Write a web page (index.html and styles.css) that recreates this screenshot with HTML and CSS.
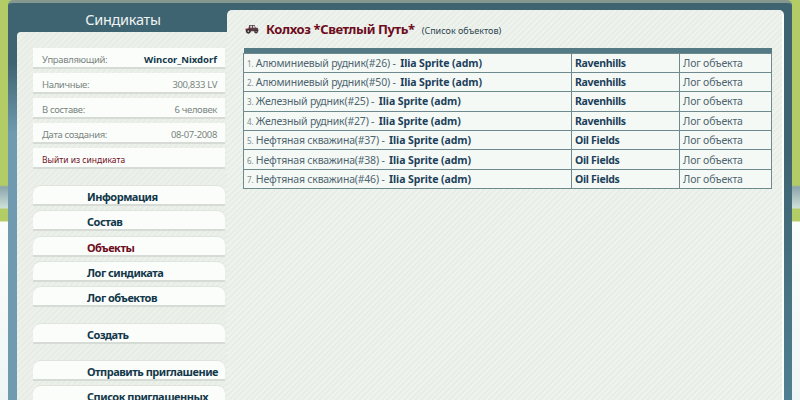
FILE: index.html
```html
<!DOCTYPE html>
<html lang="ru">
<head>
<meta charset="utf-8">
<title>Синдикаты</title>
<link rel="stylesheet" href="styles.css">
</head>
<body>
<div class="frame">
  <aside class="sidebar">
    <h2 class="side-title">Синдикаты</h2>
    <div class="side-panel">
      <div class="info-list">
        <div class="info-row"><span>Управляющий:</span><b class="boss">Wincor_Nixdorf</b></div>
        <div class="info-row"><span>Наличные:</span><span>300,833 LV</span></div>
        <div class="info-row"><span>В составе:</span><span>6 человек</span></div>
        <div class="info-row"><span>Дата создания:</span><span>08-07-2008</span></div>
        <div class="info-row"><a class="leave" href="#">Выйти из синдиката</a></div>
      </div>
      <nav class="nav-group">
        <a class="nav-item" href="#">Информация</a>
        <a class="nav-item" href="#">Состав</a>
        <a class="nav-item active" href="#">Объекты</a>
        <a class="nav-item" href="#">Лог синдиката</a>
        <a class="nav-item" href="#">Лог объектов</a>
      </nav>
      <nav class="nav-group">
        <a class="nav-item" href="#">Создать</a>
      </nav>
      <nav class="nav-group">
        <a class="nav-item" href="#">Отправить приглашение</a>
        <a class="nav-item" href="#">Список приглашенных</a>
      </nav>
    </div>
  </aside>
  <main class="main">
    <header class="heading">
      <svg class="tractor" width="16" height="10" viewBox="0 0 16 11" aria-hidden="true">
        <path d="M5 1h6l1 3h2l1 2v2H1V6l3-1z" fill="#5a3c46"/>
        <path d="M6 2h2v2H6zM9 2h2v2H9z" fill="#d8dcd8"/>
        <path d="M1 5h4v1.500H1z" fill="#a02c3c"/>
        <circle cx="4" cy="8" r="2.600" fill="#33282c"/>
        <circle cx="12.500" cy="8.500" r="2" fill="#33282c"/>
        <circle cx="4" cy="8" r="1" fill="#b8b8b4"/>
        <circle cx="12.500" cy="8.500" r=".7" fill="#b8b8b4"/>
      </svg>
      <h1 class="title">Колхоз *Светлый Путь*</h1>
      <span class="subtitle">(Список объектов)</span>
    </header>
    <table class="objects">
      <thead><tr><th></th><th></th><th></th></tr></thead>
      <tbody>
        <tr><td><small>1.</small> Алюминиевый рудник(#26) - <b>Ilia Sprite (adm)</b></td><td><b>Ravenhills</b></td><td>Лог объекта</td></tr>
        <tr><td><small>2.</small> Алюминиевый рудник(#50) - <b>Ilia Sprite (adm)</b></td><td><b>Ravenhills</b></td><td>Лог объекта</td></tr>
        <tr><td><small>3.</small> Железный рудник(#25) - <b>Ilia Sprite (adm)</b></td><td><b>Ravenhills</b></td><td>Лог объекта</td></tr>
        <tr><td><small>4.</small> Железный рудник(#27) - <b>Ilia Sprite (adm)</b></td><td><b>Ravenhills</b></td><td>Лог объекта</td></tr>
        <tr><td><small>5.</small> Нефтяная скважина(#37) - <b>Ilia Sprite (adm)</b></td><td><b>Oil Fields</b></td><td>Лог объекта</td></tr>
        <tr><td><small>6.</small> Нефтяная скважина(#38) - <b>Ilia Sprite (adm)</b></td><td><b>Oil Fields</b></td><td>Лог объекта</td></tr>
        <tr><td><small>7.</small> Нефтяная скважина(#46) - <b>Ilia Sprite (adm)</b></td><td><b>Oil Fields</b></td><td>Лог объекта</td></tr>
      </tbody>
    </table>
  </main>
</div>
</body>
</html>
```

FILE: styles.css
```css
* { box-sizing: border-box; }
html, body { height: 100%; }
body {
  margin: 0;
  height: 400px;
  overflow: hidden;
  padding: 0 8px;
  font-family: "Noto Sans", "DejaVu Sans", sans-serif;
  background: linear-gradient(180deg,
    #b4cc66 0, #b4cc66 185px,
    #8aa5ac 187px, #cfe0d8 208px,
    #b4cc66 209px, #b4cc66 221px,
    #fbfdfb 222px, #eef5f5 400px);
}
.frame {
  display: flex;
  height: 400px;
  border-top: 3px solid #84988f;
  border-radius: 5px 5px 0 0;
  padding-right: 8px;
  background:
    linear-gradient(180deg, #3f6471 0, #3f6471 150px, #4f7f92 400px) right top / 8px 100% no-repeat,
    linear-gradient(180deg, #3f6471 0, #3f6471 60px, #6f9aaf 130px, #6f9aaf 400px);
}
.sidebar {
  width: 219px;
  flex: none;
  padding-left: 9px;
  display: flex;
  flex-direction: column;
}
.side-title {
  margin: 0;
  height: 29px;
  flex: none;
  padding-left: 2px;
  text-align: center;
  font-size: 14.5px;
  letter-spacing: -.3px;
  line-height: 32px;
  font-weight: 400;
  color: #eef3f3;
}
.side-panel {
  flex: 1;
  padding: 16px 2px 0 16px;
  border-radius: 4px 0 0 0;
  background: repeating-linear-gradient(135deg, #e7ece5 0, #e7ece5 2px, #edf1eb 2px, #edf1eb 4px);
}
.info-list { display: flex; flex-direction: column; gap: 4px; margin-bottom: 16px; }
.info-row {
  display: flex;
  justify-content: space-between;
  align-items: center;
  height: 21px;
  padding: 4px 8px 0 9px;
  background: #fbfdfb;
  border-bottom: 2px solid #d6dcd5;
  font-size: 9.5px;
  letter-spacing: -.35px;
  color: #7a8580;
}
.boss { color: #12384a; letter-spacing: 0; }
.leave { color: #74141f; font-size: 8.5px; letter-spacing: 0; text-decoration: none; }
.nav-group { display: flex; flex-direction: column; gap: 4.25px; margin-bottom: 16px; }
.nav-item {
  flex: none;
  height: 21px;
  padding-left: 54px;
  line-height: 21px;
  font-size: 11px;
  letter-spacing: -.5px;
  font-weight: 700;
  color: #12384a;
  text-decoration: none;
  white-space: nowrap;
  background: #fbfdfb;
  border-radius: 8px 8px 0 0;
  border-top: 1px solid #dfe5de;
  border-bottom: 2px solid #d6dcd5;
}
.nav-item.active { color: #6e0c20; }
.main {
  flex: 1;
  margin-top: 7px;
  padding: 0 9px 0 16px;
  border-radius: 5px 5px 0 0;
  border-right: 2px solid #fbfdfb;
  background: repeating-linear-gradient(135deg, #e8ede7 0, #e8ede7 2px, #eff3ee 2px, #eff3ee 4px);
}
.heading { display: flex; align-items: center; height: 38px; padding-left: 1px; }
.tractor { flex: none; margin-right: 6px; }
.title { margin: 0; font-size: 13px; letter-spacing: -.4px; font-weight: 700; color: #6e0c20; }
.subtitle { margin-left: 7px; font-size: 9px; color: #2c4550; padding-top: 2px; }
.objects {
  width: 529px;
  table-layout: fixed;
  border-collapse: collapse;
  font-size: 10.5px;
  letter-spacing: -.2px;
  color: #4f6570;
  background: #f5f9f6;
}
.objects th { height: 5px; padding: 0; background: #537a85; }
.objects th:nth-child(1) { width: 328px; }
.objects th:nth-child(2) { width: 108px; }
.objects td {
  height: 19.4px;
  padding: 0 3px;
  border: 1px solid #6f8a8e;
  white-space: nowrap;
  overflow: hidden;
}
.objects b { color: #1c3f5a; letter-spacing: -.1px; }
.objects td:first-child b { margin-left: 2px; }
.objects td:nth-child(2) b { letter-spacing: -.3px; }
.objects small { font-size: 8px; color: #7f8c90; }
```
